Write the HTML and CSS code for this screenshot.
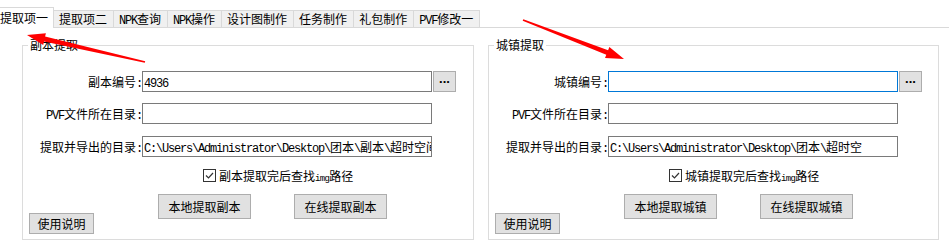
FILE: index.html
```html
<!DOCTYPE html>
<html lang="zh-CN">
<head>
  <meta charset="UTF-8" />
  <title>提取工具</title>
  <link rel="stylesheet" href="styles.css">
</head>
<body>
  <div class="tabs">
    <div class="tab active">提取项一</div>
    <div class="tab">提取项二</div>
    <div class="tab"><span class="lat">NPK</span>查询</div>
    <div class="tab"><span class="lat">NPK</span>操作</div>
    <div class="tab">设计图制作</div>
    <div class="tab">任务制作</div>
    <div class="tab">礼包制作</div>
    <div class="tab"><span class="lat">PVF</span>修改一</div>
  </div>

  <div class="page">
    <fieldset class="group">
      <legend>副本提取</legend>
      <div class="row">
        <div class="label">副本编号<span class="lat">:</span></div>
        <div class="textbox"><span class="lat">4936</span></div>
        <button class="browse">...</button>
      </div>
      <div class="row row-2">
        <div class="label"><span class="lat">PVF</span>文件所在目录<span class="lat">:</span></div>
        <div class="textbox"></div>
      </div>
      <div class="row row-3">
        <div class="label">提取并导出的目录<span class="lat">:</span></div>
        <div class="textbox"><span class="lat">C:\Users\Administrator\Desktop\</span>团本<span class="lat">\</span>副本<span class="lat">\</span>超时空间</div>
      </div>
      <div class="check-row">
        <span class="checkbox">
          <svg width="11" height="11" viewBox="0 0 11 11"><path d="M2 5.5 L4.5 8 L9 3" fill="none" stroke="#333" stroke-width="1.2"/></svg>
        </span>
        <span>副本提取完后查找<span class="tiny">img</span>路径</span>
      </div>
      <div class="actions">
        <button class="btn">本地提取副本</button>
        <button class="btn">在线提取副本</button>
      </div>
      <button class="btn help">使用说明</button>
    </fieldset>

    <fieldset class="group">
      <legend>城镇提取</legend>
      <div class="row">
        <div class="label">城镇编号<span class="lat">:</span></div>
        <div class="textbox focused"></div>
        <button class="browse">...</button>
      </div>
      <div class="row row-2">
        <div class="label"><span class="lat">PVF</span>文件所在目录<span class="lat">:</span></div>
        <div class="textbox"></div>
      </div>
      <div class="row row-3">
        <div class="label">提取并导出的目录<span class="lat">:</span></div>
        <div class="textbox"><span class="lat">C:\Users\Administrator\Desktop\</span>团本<span class="lat">\</span>超时空</div>
      </div>
      <div class="check-row">
        <span class="checkbox">
          <svg width="11" height="11" viewBox="0 0 11 11"><path d="M2 5.5 L4.5 8 L9 3" fill="none" stroke="#333" stroke-width="1.2"/></svg>
        </span>
        <span>城镇提取完后查找<span class="tiny">img</span>路径</span>
      </div>
      <div class="actions">
        <button class="btn">本地提取城镇</button>
        <button class="btn">在线提取城镇</button>
      </div>
      <button class="btn help">使用说明</button>
    </fieldset>
  </div>

  <!-- red annotation arrows drawn over the window -->
  <svg class="arrows" width="949" height="241" viewBox="0 0 949 241">
    <polygon fill="#f00" points="145.2,61.3 45.1,36.6 45.9,33.2 27,35 43.2,44.9 44,41.4 144.8,62.7"/>
    <polygon fill="#f00" points="523.3,19.3 608.1,50.2 609.4,46.9 624,59 605,58.1 606.3,54.8 522.7,20.7"/>
  </svg>
</body>
</html>
```

FILE: styles.css
```css
body {
  margin: 0;
  width: 949px;
  height: 241px;
  overflow: hidden;
  position: relative;
  background: #fff;
  font-family: "Noto Sans CJK SC", sans-serif;
  font-size: 12px;
  color: #000;
}
.lat {
  font-family: "Liberation Mono", monospace;
  font-size: 12px;
  letter-spacing: -1.2px;
}
.tiny {
  font-family: "Liberation Mono", monospace;
  font-size: 9px;
  letter-spacing: -0.7px;
}

/* tab strip */
.tabs {
  display: flex;
  align-items: flex-end;
  height: 27px;
  border-bottom: 1px solid #d9d9d9;
}
.tab {
  height: 16px;
  line-height: 16px;
  padding: 0 6px 0 5px;
  background: #f0f0f0;
  border-top: 1px solid #d9d9d9;
  border-right: 1px solid #d9d9d9;
  white-space: nowrap;
}
.tab.active {
  height: 20px;
  line-height: 20px;
  padding: 0 5px 0 0;
  margin-bottom: -1px;
  background: #fff;
}

/* tab page */
.page {
  display: grid;
  grid-template-columns: 452px 451px;
  column-gap: 14px;
  padding: 10px 0 0 22px;
}
.group {
  margin: 0;
  min-width: 0;
  border: 1px solid #dcdcdc;
  padding: 19px 5px 5px 5px;
}
.group legend {
  padding: 0 2px;
  line-height: 14px;
}
.row {
  display: flex;
  align-items: center;
  height: 21px;
}
.row-2 {
  margin-top: 11px;
}
.row-3 {
  margin-top: 12px;
}
.label {
  width: 114px;
  text-align: right;
  white-space: nowrap;
}
.textbox {
  box-sizing: border-box;
  width: 290px;
  height: 21px;
  line-height: 19px;
  padding-left: 1px;
  border: 1px solid #7a7a7a;
  background: #fff;
  white-space: nowrap;
  overflow: hidden;
}
.textbox.focused {
  border-color: #0078d7;
}
button {
  font: inherit;
  color: #000;
  background: #e1e1e1;
  border: 1px solid #adadad;
  padding: 0;
  margin: 0;
}
.browse {
  box-sizing: border-box;
  width: 23px;
  height: 21px;
  margin-left: 1px;
  padding-bottom: 6px;
  font-family: "Liberation Sans", sans-serif;
  font-size: 13px;
  font-weight: bold;
  line-height: 12px;
}
.check-row {
  display: flex;
  align-items: center;
  gap: 3px;
  height: 16px;
  margin-top: 10px;
  padding-left: 175px;
}
.checkbox {
  box-sizing: border-box;
  width: 13px;
  height: 13px;
  border: 1px solid #333;
  background: #fff;
  display: flex;
  align-items: center;
  justify-content: center;
}
.actions {
  display: flex;
  gap: 43px;
  margin-top: 11px;
  padding-left: 130px;
}
.btn {
  box-sizing: border-box;
  width: 93px;
  height: 25px;
}
.help {
  display: block;
  width: 65px;
  height: 21px;
  margin: -6px 0 0 1px;
}
.arrows {
  position: absolute;
  top: 0;
  left: 0;
  pointer-events: none;
}
```
